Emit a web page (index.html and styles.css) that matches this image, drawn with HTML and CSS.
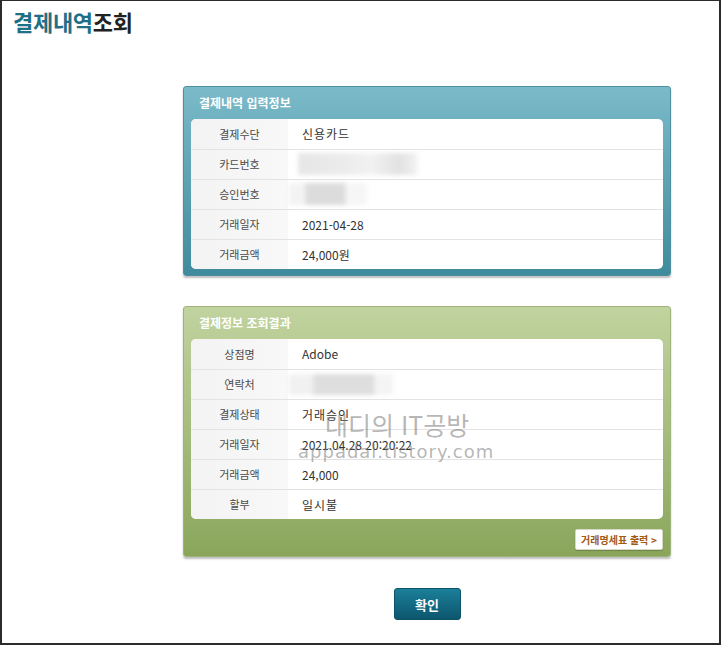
FILE: index.html
```html
<!DOCTYPE html>
<html lang="ko">
<head>
    <meta charset="UTF-8">
    <meta name="viewport" content="width=device-width, initial-scale=1.0">
    <title>결제내역조회</title>
    <link rel="stylesheet" href="styles.css">
</head>
<body>

<div class="page">
    <h1 class="title"><span class="hl">결제내역</span>조회</h1>

    <div class="content">
        <div class="panel blue">
            <div class="panel-head">결제내역 입력정보</div>
            <table class="info">
                <tr><th>결제수단</th><td>신용카드</td></tr>
                <tr><th>카드번호</th><td><span class="blur card"></span></td></tr>
                <tr><th>승인번호</th><td><span class="blur appr"></span></td></tr>
                <tr><th>거래일자</th><td class="num">2021-04-28</td></tr>
                <tr><th>거래금액</th><td class="num">24,000원</td></tr>
            </table>
        </div>

        <div class="panel green">
            <div class="panel-head">결제정보 조회결과</div>
            <table class="info">
                <tr><th>상점명</th><td class="num">Adobe</td></tr>
                <tr><th>연락처</th><td><span class="blur tel"></span></td></tr>
                <tr><th>결제상태</th><td>거래승인</td></tr>
                <tr><th>거래일자</th><td class="num">2021.04.28 20:20:22</td></tr>
                <tr><th>거래금액</th><td class="num">24,000</td></tr>
                <tr><th>할부</th><td>일시불</td></tr>
            </table>
            <div class="panel-foot">
                <button class="print">거래명세표 출력 &gt;</button>
            </div>
        </div>

        <div class="actions">
            <button class="ok">확인</button>
        </div>
    </div>

    <div class="watermark">
        <div class="wm1">대디의 IT공방</div>
        <div class="wm2">appadal.tistory.com</div>
    </div>
</div>

</body>
</html>
```

FILE: styles.css
```css
body {
    margin: 0;
    font-family: "Noto Sans CJK KR", "Noto Sans", sans-serif;
    background: #fff;
}
.page {
    position: relative;
    width: 721px;
    height: 645px;
    box-sizing: border-box;
    border: 2px solid #2b2b2b;
    border-top-width: 1px;
    overflow: hidden;
}
.title {
    margin: 0;
    height: 85px;
    padding: 6px 0 0 11px;
    box-sizing: border-box;
    font-size: 22px;
    line-height: 28px;
    font-weight: 700;
    color: #222;
    letter-spacing: -0.3px;
}
.title .hl {
    color: #1f6f86;
}
.content {
    margin-left: 181px;
    width: 488px;
}
.panel {
    border-radius: 3px;
    padding: 0 7px 6px;
    box-shadow: 0 2px 2px rgba(0,0,0,0.25);
}
.panel.blue {
    background: linear-gradient(#7bbac9, #3f8b9d);
    border: 1px solid #4d8f9f;
}
.panel.green {
    background: linear-gradient(#c1d39f, #8aa65b);
    border: 1px solid #9fb47a;
    margin-top: 30px;
    padding-bottom: 0;
}
.panel-head {
    height: 32px;
    line-height: 32px;
    padding-left: 8px;
    color: #fff;
    font-size: 12px;
    font-weight: 700;
}
.info {
    width: 100%;
    border-collapse: collapse;
    background: #fff;
    border-radius: 5px;
    overflow: hidden;
}
.info tr {
    height: 30px;
    border-bottom: 1px solid #e3e3e3;
}
.info tr:last-child {
    border-bottom: none;
}
.info th {
    width: 97px;
    padding: 0;
    background: linear-gradient(90deg, #f3f3f3, #f8f8f8);
    color: #4a4a4a;
    font-size: 11px;
    font-weight: 400;
}
.info td {
    padding: 0 0 0 14px;
    color: #333;
    font-size: 12px;
    letter-spacing: 1px;
}
.info td.num {
    letter-spacing: 0;
}
.blur {
    display: inline-block;
    height: 22px;
    vertical-align: middle;
    filter: blur(2px);
}
.blur.card {
    width: 120px;
    margin-left: -4px;
    background: linear-gradient(90deg, #e6e6e6 0, #ececec 40%, #f2f2f2 60%, #e2e2e2 85%, #f4f4f4 100%);
}
.blur.appr {
    width: 78px;
    margin-left: -13px;
    background: linear-gradient(90deg, #f3f3f3 0, #f3f3f3 20%, #dcdcdc 22%, #dcdcdc 70%, #f6f6f6 75%);
}
.blur.tel {
    width: 104px;
    margin-left: -13px;
    height: 21px;
    background: linear-gradient(90deg, #f1f1f1 0, #f1f1f1 22%, #dedede 25%, #dedede 80%, #f4f4f4 84%);
}
.panel-foot {
    display: flex;
    justify-content: flex-end;
    padding: 10px 0 6px;
}
.print {
    height: 21px;
    padding: 0 5px;
    border: 1px solid #d8d8c8;
    border-radius: 2px;
    background: #fff;
    color: #a35810;
    font-family: "Noto Sans CJK KR", sans-serif;
    font-size: 10px;
    font-weight: 700;
    box-shadow: 0 1px 1px rgba(0,0,0,0.2);
}
.actions {
    display: flex;
    justify-content: center;
    margin-top: 31px;
}
.ok {
    width: 67px;
    height: 32px;
    border: 1px solid #0d5269;
    border-radius: 3px;
    background: linear-gradient(#1b7f99, #0c566e);
    color: #fff;
    font-family: "Noto Sans CJK KR", sans-serif;
    font-size: 13px;
    font-weight: 700;
}
.watermark {
    position: absolute;
    left: 296px;
    top: 411px;
    color: rgba(120,120,120,0.55);
    pointer-events: none;
    line-height: 1;
}
.wm1 {
    margin-left: 27px;
    font-size: 25px;
}
.wm2 {
    margin-top: 6px;
    font-family: "DejaVu Sans", sans-serif;
    font-size: 18px;
    letter-spacing: 1px;
}
```
